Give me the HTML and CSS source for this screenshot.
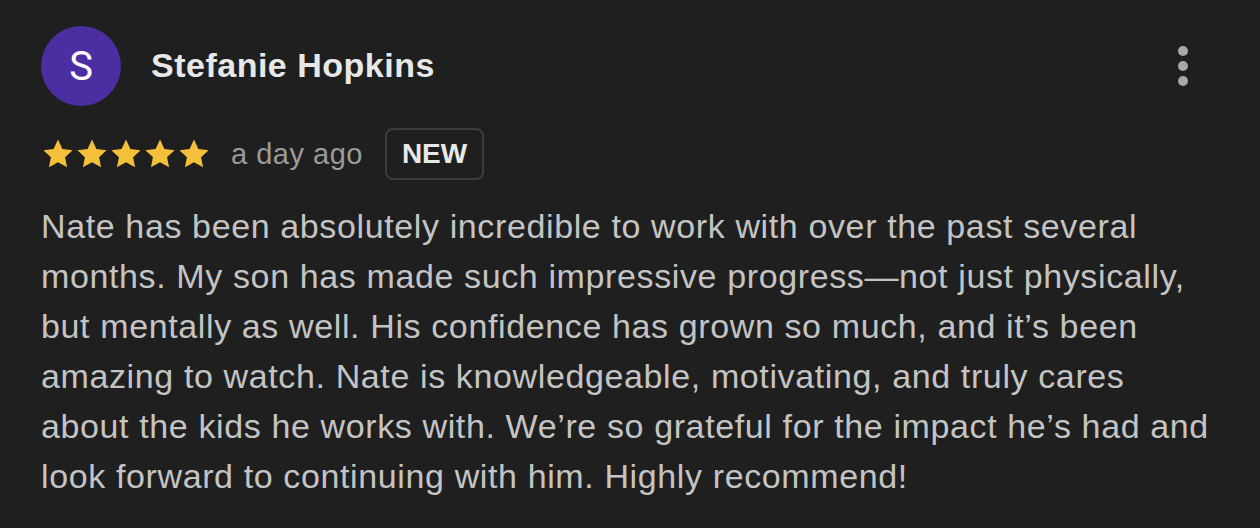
FILE: index.html
```html
<!DOCTYPE html>
<html>
<head>
<meta charset="utf-8">
<link rel="stylesheet" href="styles.css">
</head>
<body>
<div class="review">
  <div class="header">
    <div class="avatar">S</div>
    <div class="name">Stefanie Hopkins</div>
    <div class="more" aria-label="More options">
      <span class="dot"></span><span class="dot"></span><span class="dot"></span>
    </div>
  </div>
  <div class="meta">
    <div class="stars">
      <svg viewBox="0 0 24 24" class="star"><path d="M12 1.8l3.1 6.6 7.2.9-5.3 5 1.4 7.1L12 17.9l-6.4 3.5 1.4-7.1-5.3-5 7.2-.9z"/></svg>
      <svg viewBox="0 0 24 24" class="star"><path d="M12 1.8l3.1 6.6 7.2.9-5.3 5 1.4 7.1L12 17.9l-6.4 3.5 1.4-7.1-5.3-5 7.2-.9z"/></svg>
      <svg viewBox="0 0 24 24" class="star"><path d="M12 1.8l3.1 6.6 7.2.9-5.3 5 1.4 7.1L12 17.9l-6.4 3.5 1.4-7.1-5.3-5 7.2-.9z"/></svg>
      <svg viewBox="0 0 24 24" class="star"><path d="M12 1.8l3.1 6.6 7.2.9-5.3 5 1.4 7.1L12 17.9l-6.4 3.5 1.4-7.1-5.3-5 7.2-.9z"/></svg>
      <svg viewBox="0 0 24 24" class="star"><path d="M12 1.8l3.1 6.6 7.2.9-5.3 5 1.4 7.1L12 17.9l-6.4 3.5 1.4-7.1-5.3-5 7.2-.9z"/></svg>
    </div>
    <span class="time">a day ago</span>
    <span class="badge">NEW</span>
  </div>
  <p class="text">Nate has been absolutely incredible to work with over the past several<br>months. My son has made such impressive progress—not just physically,<br>but mentally as well. His confidence has grown so much, and it’s been<br>amazing to watch. Nate is knowledgeable, motivating, and truly cares<br>about the kids he works with. We’re so grateful for the impact he’s had and<br>look forward to continuing with him. Highly recommend!</p>
</div>
</body>
</html>
```
FILE: styles.css
```css
html, body {
  margin: 0;
  padding: 0;
  background: #1f1f1f;
}
body {
  font-family: "Liberation Sans", Arial, sans-serif;
  width: 1260px;
  height: 528px;
  overflow: hidden;
}
.review {
  padding: 26px 0 0 41px;
}
.header {
  display: flex;
  align-items: center;
  height: 80px;
}
.avatar {
  width: 80px;
  height: 80px;
  border-radius: 50%;
  background: #4b2ea2;
  color: #ffffff;
  font-family: Roboto, "Liberation Sans", sans-serif;
  font-size: 40px;
  display: flex;
  align-items: center;
  justify-content: center;
  flex: none;
}
.name {
  margin-left: 30px;
  font-size: 34px;
  letter-spacing: 0.5px;
  font-weight: bold;
  color: #e8e8e8;
  flex: 1;
  margin-top: -2px;
}
.more {
  display: flex;
  flex-direction: column;
  align-items: center;
  gap: 5px;
  width: 20px;
  margin-right: 67px;
  align-self: flex-start;
  margin-top: 20px;
}
.dot {
  width: 10px;
  height: 10px;
  border-radius: 50%;
  background: #a8a8a8;
}
.meta {
  display: flex;
  align-items: center;
  margin-top: 22px;
  height: 52px;
}
.stars {
  display: flex;
  gap: 0;
}
.star {
  width: 34px;
  height: 34px;
  fill: #f4bf3a;
  display: block;
}
.time {
  margin-left: 20px;
  font-size: 29px;
  letter-spacing: 0.5px;
  color: #9b9b9b;
}
.badge {
  margin-left: 22px;
  border: 2px solid #3b3d40;
  border-radius: 8px;
  height: 52px;
  box-sizing: border-box;
  padding: 0 15px;
  display: flex;
  align-items: center;
  font-size: 28px;
  font-weight: bold;
  color: #e8e8e8;
}
.text {
  margin: 21px 0 0 0;
  font-size: 34px;
  letter-spacing: 0.62px;
  line-height: 50px;
  color: #c4c4c4;
  white-space: nowrap;
}
```
